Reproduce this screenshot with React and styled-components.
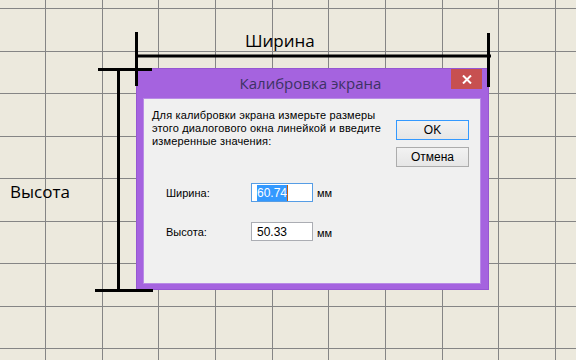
import styled, { createGlobalStyle } from "styled-components";

const GlobalStyle = createGlobalStyle`
  html, body {
    margin: 0;
    padding: 0;
    background: #ece9dd;
  }
`;

const Desk = styled.div`
  position: relative;
  width: 576px;
  height: 360px;
  overflow: hidden;
  background: #ece9dd;
  font-family: "Open Sans", "Noto Sans", sans-serif;
`;

const Layer = styled.svg`
  position: absolute;
  left: 0;
  top: 0;
  pointer-events: none;
  z-index: ${(p) => p.$z || 0};
`;

const BigLabel = styled.div`
  position: absolute;
  left: ${(p) => p.$x}px;
  top: ${(p) => p.$y}px;
  font-size: 17px;
  color: #000;
  line-height: 1;
`;

const Window = styled.div`
  position: absolute;
  left: 136px;
  top: 68px;
  width: 353px;
  height: 222px;
  box-sizing: border-box;
  background: #a563df;
  border: 1px solid #9656d2;
  display: flex;
  flex-direction: column;
  z-index: 1;
`;

const TitleBar = styled.div`
  height: 29px;
  position: relative;
  display: flex;
  align-items: center;
  justify-content: center;
`;

const Title = styled.div`
  font-family: "Open Sans", "Noto Sans", sans-serif;
  font-size: 15px;
  color: #3c3264;
  margin-top: -1px;
  margin-left: -4px;
`;

const CloseButton = styled.div`
  position: absolute;
  right: 6px;
  top: 0;
  width: 31px;
  height: 20px;
  background: #c75050;
  display: flex;
  align-items: center;
  justify-content: center;
`;

const Client = styled.div`
  flex: 1;
  margin: 0 7px 5px 6px;
  background: #f0f0f0;
  border: 1px solid #b98be6;
  display: flex;
  font-family: "Liberation Sans", Arial, sans-serif;
  font-size: 11px;
  color: #000;
`;

const Left = styled.div`
  flex: 1;
  padding: 10px 0 0 8px;
`;

const Message = styled.div`
  line-height: 13px;
  letter-spacing: 0.15px;
`;

const Form = styled.div`
  margin-top: 35px;
  padding-left: 14px;
  display: flex;
  flex-direction: column;
  gap: 20px;
`;

const Row = styled.div`
  display: flex;
  align-items: center;
`;

const FieldLabel = styled.div`
  width: 85px;
`;

const Field = styled.div`
  width: 62px;
  height: 19px;
  box-sizing: border-box;
  background: #fff;
  border: 1px solid ${(p) => (p.$focus ? "#569de5" : "#abadb3")};
  display: flex;
  align-items: center;
  padding-left: 5px;
  font-size: 12px;
`;

const Selected = styled.span`
  background: #3399ff;
  color: #fff;
  padding: 1px 0;
  border-right: 1px solid #c05a10;
`;

const Unit = styled.div`
  margin-left: 4px;
  margin-top: ${(p) => p.$down || 0}px;
`;

const Buttons = styled.div`
  padding: 21px 11px 0 0;
  display: flex;
  flex-direction: column;
  gap: 7px;
`;

const Button = styled.div`
  width: 73px;
  height: 20px;
  box-sizing: border-box;
  border: 1px solid ${(p) => (p.$primary ? "#3399ff" : "#acacac")};
  background: linear-gradient(#f2f2f2, #e6e6e6);
  display: flex;
  align-items: center;
  justify-content: center;
  font-size: 12px;
`;

const gridX = Array.from({ length: 11 }, (_, i) => 45 + i * 56.67);
const gridY = Array.from({ length: 9 }, (_, i) => 8 + i * 42.5);

export default function App() {
  return (
    <>
      <GlobalStyle />
      <Desk>
        <Layer width="576" height="360">
          {gridX.map((x) => (
            <line key={"x" + x} x1={Math.round(x) + 0.5} y1="0" x2={Math.round(x) + 0.5} y2="360" stroke="#858585" strokeWidth="1" />
          ))}
          {gridY.map((y) => (
            <line key={"y" + y} x1="0" y1={Math.round(y) + 0.5} x2="576" y2={Math.round(y) + 0.5} stroke="#858585" strokeWidth="1" />
          ))}
        </Layer>

        <BigLabel $x={245} $y={32}>Ширина</BigLabel>
        <BigLabel $x={10} $y={183}>Высота</BigLabel>

        <Window>
          <TitleBar>
            <Title>Калибровка экрана</Title>
            <CloseButton>
              <svg width="10" height="9" viewBox="0 0 10 9">
                <path d="M1 0.5 L9 8.5 M9 0.5 L1 8.5" stroke="#fff" strokeWidth="2" />
              </svg>
            </CloseButton>
          </TitleBar>
          <Client>
            <Left>
              <Message>
                Для калибровки экрана измерьте размеры
                <br />
                этого диалогового окна линейкой и введите
                <br />
                измеренные значения:
              </Message>
              <Form>
                <Row>
                  <FieldLabel>Ширина:</FieldLabel>
                  <Field $focus>
                    <Selected>60.74</Selected>
                  </Field>
                  <Unit>мм</Unit>
                </Row>
                <Row>
                  <FieldLabel>Высота:</FieldLabel>
                  <Field>50.33</Field>
                  <Unit $down={3}>мм</Unit>
                </Row>
              </Form>
            </Left>
            <Buttons>
              <Button $primary>OK</Button>
              <Button>Отмена</Button>
            </Buttons>
          </Client>
        </Window>

        <Layer width="576" height="360" $z={2}>
          <line x1="137" y1="56" x2="491" y2="56" stroke="#000" strokeWidth="3" />
          <line x1="136.5" y1="32" x2="136.5" y2="86" stroke="#000" strokeWidth="3" />
          <line x1="488.5" y1="33" x2="488.5" y2="87" stroke="#000" strokeWidth="3" />
          <line x1="98" y1="69.5" x2="152" y2="69.5" stroke="#000" strokeWidth="3" />
          <line x1="118.5" y1="69" x2="118.5" y2="290" stroke="#000" strokeWidth="3" />
          <line x1="95" y1="290.5" x2="153" y2="290.5" stroke="#000" strokeWidth="3" />
        </Layer>
      </Desk>
    </>
  );
}
